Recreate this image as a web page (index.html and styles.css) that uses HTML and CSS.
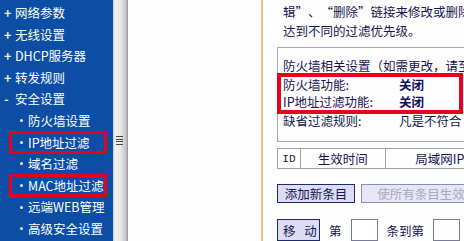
FILE: index.html
```html
<!DOCTYPE html>
<html lang="zh-CN">
<head>
	<title>安全设置</title>
	<meta charset="utf-8">
	<link rel="stylesheet" href="styles.css">
</head>
<body>
	<div class="frame">
		<nav class="side">
			<div class="item"><span class="sign">+</span>网络参数</div>
			<div class="item"><span class="sign">+</span>无线设置</div>
			<div class="item"><span class="sign">+</span>DHCP服务器</div>
			<div class="item"><span class="sign">+</span>转发规则</div>
			<div class="item"><span class="sign">-</span>安全设置</div>
			<div class="sub"><span class="dot"></span>防火墙设置</div>
			<div class="sub mark"><span class="dot"></span>IP地址过滤</div>
			<div class="sub"><span class="dot"></span>域名过滤</div>
			<div class="sub mark"><span class="dot"></span>MAC地址过滤</div>
			<div class="sub"><span class="dot"></span>远端WEB管理</div>
			<div class="sub"><span class="dot"></span>高级安全设置</div>
		</nav>
		<div class="scroll"><span class="grip"></span></div>
		<div class="blank"></div>
		<main class="main">
			<p class="note">辑<span class="q">”</span>、<span class="q">“</span>删除<span class="q">”</span>链接来修改或删除<br>达到不同的过滤优先级。</p>
			<div class="fw">
				<div class="line">防火墙相关设置（如需更改，请至</div>
				<div class="rows">
					<div class="row"><span class="key">防火墙功能:</span><b>关闭</b></div>
					<div class="row"><span class="key">IP地址过滤功能:</span><b>关闭</b></div>
				</div>
				<div class="row"><span class="key">缺省过滤规则:</span>凡是不符合</div>
			</div>
			<table class="rules">
				<tr><td class="id">ID</td><td class="time">生效时间</td><td class="lan">局域网IP</td></tr>
			</table>
			<div class="btns">
				<button class="btn add">添加新条目</button>
				<button class="btn off">使所有条目生效</button>
			</div>
			<div class="move">
				<button class="btn go">移 动</button>
				<span>第</span><input class="num"><span>条到第</span><input class="num">
			</div>
		</main>
	</div>
</body>
</html>
```
FILE: styles.css
```css
*{
	box-sizing: border-box;
}

body{
	margin: 0;
	font-family: 'Noto Sans CJK SC', 'DejaVu Sans', sans-serif;
	font-size: 12px;
	background: #fdfdfd;
	overflow: hidden;
}

.frame{
	display: flex;
	height: 241px;
	width: 464px;
	overflow: hidden;
}

.side{
	width: 113px;
	flex: none;
	background: #0c4ea6;
	color: #fff;
	padding-top: 2px;
	font-size: 12.5px;
}

.item, .sub{
	height: 21.6px;
	line-height: 21.6px;
	white-space: nowrap;
}

.item{
	padding-left: 4px;
}

.sign{
	display: inline-block;
	width: 11px;
	font-weight: bold;
	color: #f4f0c8;
}

.sub{
	display: flex;
	align-items: center;
	margin-left: 10px;
	width: 96px;
	padding-left: 10px;
}

.dot{
	width: 3px;
	height: 3px;
	border-radius: 50%;
	background: #f4f0c8;
	margin-right: 5px;
	flex: none;
}

.mark{
	outline: 3.5px solid #e8001c;
	outline-offset: -2px;
}

.scroll{
	width: 15px;
	flex: none;
	background: linear-gradient(to right, #c8c8c8 0, #f2f2f2 2px, #e6e6e6 8px, #c4c4c4 13px, #8e8e8e 15px);
	position: relative;
}

.grip{
	position: absolute;
	left: 3px;
	top: 136px;
	width: 7px;
	height: 9px;
	background: repeating-linear-gradient(to bottom, #444 0, #444 1px, transparent 1px, transparent 2.5px);
}

.blank{
	width: 133px;
	flex: none;
	background: #fdfdfd;
}

.main{
	flex: none;
	width: 220px;
	border-left: 2px solid #f2c08c;
	padding-left: 14px;
	color: #151550;
	white-space: nowrap;
}

.note{
	margin: 2px 0 0 6px;
	line-height: 19px;
	font-size: 12.5px;
}

.q{
	display: inline-block;
	width: 1em;
	text-align: center;
}

.fw{
	margin-top: 7px;
	width: 260px;
	border: 1px solid #a8a8a8;
	padding: 9px 0 12px 5px;
	line-height: 17.5px;
	font-size: 12.5px;
}

.rows{
	margin-left: -4px;
	padding-left: 4px;
	width: 182px;
	outline: 4px solid #e8001c;
	outline-offset: -2px;
	padding-top: 1px;
	padding-bottom: 1px;
}

.key{
	display: inline-block;
	width: 116px;
}

.row b{
	color: #101060;
}

.rules{
	margin-top: 6px;
	border-collapse: collapse;
	width: 218px;
	font-size: 12.5px;
}

.rules td{
	border: 1px solid #a0a0a0;
	height: 19px;
	padding: 0;
	text-align: center;
}

.id{
	width: 23px;
	font-family: 'Liberation Mono', monospace;
	font-size: 11px;
}

.time{
	width: 85px;
}

.lan{
	width: 110px;
}

.btns{
	margin-top: 15px;
	display: flex;
	gap: 6px;
}

.btn{
	font-family: inherit;
	font-size: 12.5px;
	height: 19px;
	padding: 0 5px;
	line-height: 15px;
	background: #dcdcf4;
	border: 1px solid #1e2a6a;
	color: #151550;
	border-radius: 0;
}

.add{
	width: 88px;
}

.off{
	width: 120px;
	color: #a8a8c0;
	background: #e6e6f6;
	border-color: #8c8cb0;
	flex: none;
}

.move{
	margin-top: 16px;
	display: flex;
	align-items: center;
	gap: 9px;
	font-size: 12.5px;
}

.go{
	width: 43px;
	height: 22px;
	letter-spacing: 3px;
}

.num{
	width: 27px;
	height: 22px;
	border: 1px solid #7a7a9a;
	background: #fff;
}
```
